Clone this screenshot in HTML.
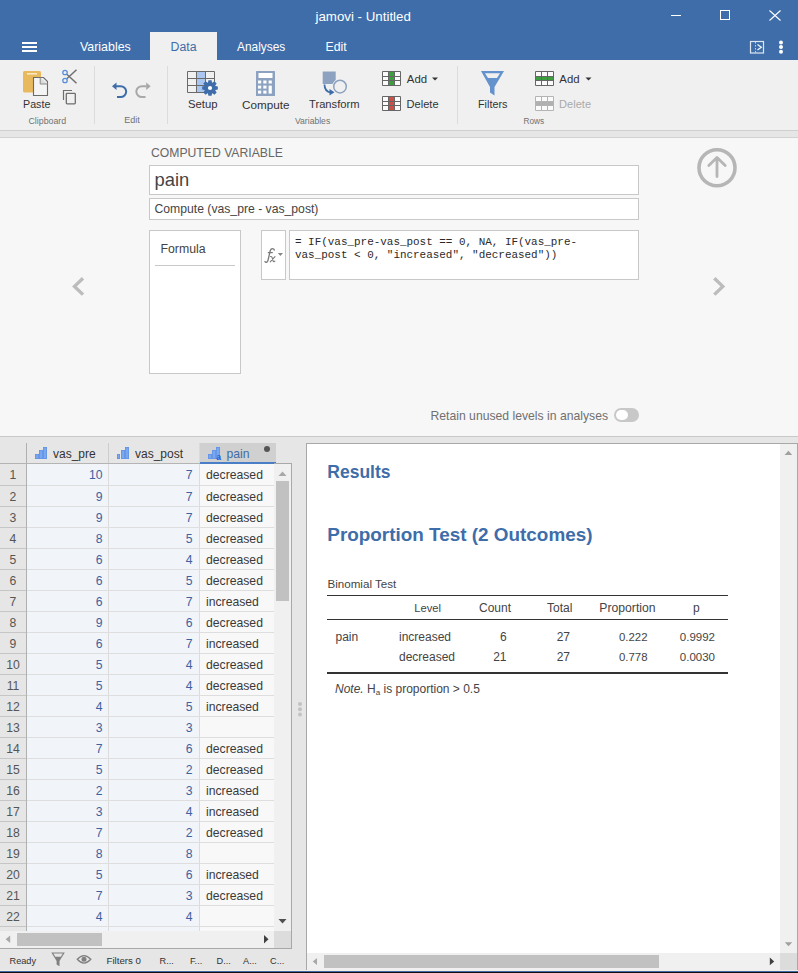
<!DOCTYPE html>
<html><head><meta charset="utf-8">
<style>
*{box-sizing:border-box;margin:0;padding:0}
html,body{width:798px;height:973px;overflow:hidden;background:#f0f0f0;font-family:"Liberation Sans",sans-serif}
body{position:relative}
.t{position:absolute;white-space:nowrap;line-height:1}
.r{position:absolute}
svg{position:absolute;left:0;top:0}
</style></head><body>
<div class="r" style="left:0px;top:0px;width:798px;height:60px;background:#3e6da9;"></div>
<div class="t" style="left:315.5px;top:9.74px;font-size:13.3px;color:#fff;font-weight:normal;">jamovi - Untitled</div>
<div class="r" style="left:671px;top:15px;width:10px;height:1px;background:#fff;"></div>
<div class="r" style="left:720px;top:10px;width:10px;height:10px;background:none;border:1px solid #fff;"></div>
<div class="r" style="left:22px;top:42px;width:15px;height:2px;background:#fff;"></div>
<div class="r" style="left:22px;top:46px;width:15px;height:2px;background:#fff;"></div>
<div class="r" style="left:22px;top:50px;width:15px;height:2px;background:#fff;"></div>
<div class="r" style="left:150px;top:32px;width:67px;height:28px;background:#f0f0f0;"></div>
<div class="t" style="left:80px;top:40.50px;font-size:12.4px;color:#fff;font-weight:normal;">Variables</div>
<div class="t" style="left:170.5px;top:40.59px;font-size:12.3px;color:#3e6da9;font-weight:normal;">Data</div>
<div class="t" style="left:237px;top:41.93px;font-size:11.9px;color:#fff;font-weight:normal;">Analyses</div>
<div class="t" style="left:325.5px;top:40.59px;font-size:12.3px;color:#fff;font-weight:normal;">Edit</div>
<div class="r" style="left:0px;top:60px;width:798px;height:70px;background:#f0f0f0;"></div>
<div class="r" style="left:94px;top:66px;width:1px;height:58px;background:#dcdcdc;"></div>
<div class="r" style="left:167px;top:66px;width:1px;height:58px;background:#dcdcdc;"></div>
<div class="r" style="left:457px;top:66px;width:1px;height:58px;background:#dcdcdc;"></div>
<div class="t" style="left:23px;top:99.44px;font-size:10.7px;color:#333;font-weight:normal;">Paste</div>
<div class="t" style="left:188px;top:98.93px;font-size:11.3px;color:#333;font-weight:normal;">Setup</div>
<div class="t" style="left:242px;top:98.60px;font-size:11.7px;color:#333;font-weight:normal;">Compute</div>
<div class="t" style="left:309px;top:99.02px;font-size:11.2px;color:#333;font-weight:normal;">Transform</div>
<div class="t" style="left:478px;top:99.36px;font-size:10.8px;color:#333;font-weight:normal;">Filters</div>
<div class="t" style="left:406.8px;top:73.65px;font-size:11.4px;color:#333;font-weight:normal;">Add</div>
<div class="t" style="left:406.5px;top:98.90px;font-size:11.1px;color:#333;font-weight:normal;">Delete</div>
<div class="t" style="left:559.3px;top:73.65px;font-size:11.4px;color:#333;font-weight:normal;">Add</div>
<div class="t" style="left:559px;top:98.90px;font-size:11.1px;color:#aaa;font-weight:normal;">Delete</div>
<div class="t" style="left:28.5px;top:116.55px;font-size:8.8px;color:#707070;font-weight:normal;">Clipboard</div>
<div class="t" style="left:124.3px;top:115.98px;font-size:9px;color:#707070;font-weight:normal;">Edit</div>
<div class="t" style="left:295px;top:116.72px;font-size:8.6px;color:#707070;font-weight:normal;">Variables</div>
<div class="t" style="left:523.5px;top:116.97px;font-size:8.3px;color:#707070;font-weight:normal;">Rows</div>
<div class="r" style="left:0px;top:130px;width:798px;height:1px;background:#cfcfcf;"></div>
<div class="r" style="left:0px;top:131px;width:798px;height:6px;background:#e6e6e6;"></div>
<div class="r" style="left:0px;top:137px;width:798px;height:1px;background:#d2d2d2;"></div>
<div class="r" style="left:0px;top:138px;width:798px;height:298px;background:#f7f7f7;"></div>
<div class="t" style="left:151px;top:146.67px;font-size:12.2px;color:#666;font-weight:normal;">COMPUTED VARIABLE</div>
<div class="r" style="left:149px;top:165px;width:490px;height:30px;background:#fff;border:1px solid #c8c8c8;"></div>
<div class="t" style="left:154.5px;top:170.72px;font-size:18.4px;color:#444;font-weight:normal;">pain</div>
<div class="r" style="left:149px;top:198px;width:490px;height:22px;background:#fff;border:1px solid #c8c8c8;"></div>
<div class="t" style="left:154.5px;top:203.17px;font-size:12.2px;color:#444;font-weight:normal;">Compute (vas_pre - vas_post)</div>
<div class="r" style="left:149px;top:230px;width:92px;height:144px;background:#fff;border:1px solid #c8c8c8;"></div>
<div class="t" style="left:160.5px;top:242.59px;font-size:12.3px;color:#444;font-weight:normal;">Formula</div>
<div class="r" style="left:155px;top:265px;width:80px;height:1px;background:#c8c8c8;"></div>
<div class="r" style="left:261px;top:230px;width:25px;height:50px;background:#fff;border:1px solid #c8c8c8;"></div>
<div class="r" style="left:289px;top:230px;width:350px;height:50px;background:#fff;border:1px solid #c8c8c8;"></div>
<div class="t" style="left:295px;top:237.43px;font-size:11.3px;color:#2a2a2a;font-weight:normal;font-family:'Liberation Mono',monospace;transform:scaleX(0.9675);transform-origin:0 0">= IF(vas_pre-vas_post == 0, NA, IF(vas_pre-</div>
<div class="t" style="left:295px;top:250.03px;font-size:11.3px;color:#2a2a2a;font-weight:normal;font-family:'Liberation Mono',monospace;transform:scaleX(0.9675);transform-origin:0 0">vas_post &lt; 0, "increased", "decreased"))</div>
<div class="t" style="left:430.5px;top:409.67px;font-size:12.2px;color:#707070;font-weight:normal;">Retain unused levels in analyses</div>
<div class="r" style="left:614px;top:408px;width:25px;height:14px;background:#c8c8c8;border-radius:7px"></div>
<div class="r" style="left:616px;top:409.8px;width:12px;height:10.6px;background:#fff;border-radius:5.5px"></div>
<div class="r" style="left:0px;top:436px;width:798px;height:1px;background:#c8c8c8;"></div>
<div class="r" style="left:0px;top:437px;width:798px;height:536px;background:#e6e6e6;"></div>
<div class="r" style="left:27px;top:464px;width:81px;height:467px;background:#f1f4f8;"></div>
<div class="r" style="left:109px;top:464px;width:90px;height:467px;background:#f1f4f8;"></div>
<div class="r" style="left:200px;top:464px;width:74px;height:467px;background:#f8f8f8;"></div>
<div class="r" style="left:26px;top:443px;width:1px;height:488px;background:#b0b0b0;"></div>
<div class="r" style="left:108px;top:443px;width:1px;height:20px;background:#cdcdcd;"></div>
<div class="r" style="left:199px;top:443px;width:1px;height:20px;background:#dadada;"></div>
<div class="r" style="left:108px;top:464px;width:1px;height:467px;background:#dcdcdc;"></div>
<div class="r" style="left:199px;top:464px;width:1px;height:467px;background:#dcdcdc;"></div>
<div class="r" style="left:0px;top:463px;width:274px;height:1px;background:#b4b4b4;"></div>
<div class="r" style="left:0px;top:485px;width:26px;height:1px;background:#c6c6c6;"></div>
<div class="r" style="left:27px;top:485px;width:247px;height:1px;background:#dedede;"></div>
<div class="r" style="left:0px;top:506px;width:26px;height:1px;background:#c6c6c6;"></div>
<div class="r" style="left:27px;top:506px;width:247px;height:1px;background:#dedede;"></div>
<div class="r" style="left:0px;top:527px;width:26px;height:1px;background:#c6c6c6;"></div>
<div class="r" style="left:27px;top:527px;width:247px;height:1px;background:#dedede;"></div>
<div class="r" style="left:0px;top:548px;width:26px;height:1px;background:#c6c6c6;"></div>
<div class="r" style="left:27px;top:548px;width:247px;height:1px;background:#dedede;"></div>
<div class="r" style="left:0px;top:569px;width:26px;height:1px;background:#c6c6c6;"></div>
<div class="r" style="left:27px;top:569px;width:247px;height:1px;background:#dedede;"></div>
<div class="r" style="left:0px;top:590px;width:26px;height:1px;background:#c6c6c6;"></div>
<div class="r" style="left:27px;top:590px;width:247px;height:1px;background:#dedede;"></div>
<div class="r" style="left:0px;top:611px;width:26px;height:1px;background:#c6c6c6;"></div>
<div class="r" style="left:27px;top:611px;width:247px;height:1px;background:#dedede;"></div>
<div class="r" style="left:0px;top:632px;width:26px;height:1px;background:#c6c6c6;"></div>
<div class="r" style="left:27px;top:632px;width:247px;height:1px;background:#dedede;"></div>
<div class="r" style="left:0px;top:653px;width:26px;height:1px;background:#c6c6c6;"></div>
<div class="r" style="left:27px;top:653px;width:247px;height:1px;background:#dedede;"></div>
<div class="r" style="left:0px;top:674px;width:26px;height:1px;background:#c6c6c6;"></div>
<div class="r" style="left:27px;top:674px;width:247px;height:1px;background:#dedede;"></div>
<div class="r" style="left:0px;top:695px;width:26px;height:1px;background:#c6c6c6;"></div>
<div class="r" style="left:27px;top:695px;width:247px;height:1px;background:#dedede;"></div>
<div class="r" style="left:0px;top:716px;width:26px;height:1px;background:#c6c6c6;"></div>
<div class="r" style="left:27px;top:716px;width:247px;height:1px;background:#dedede;"></div>
<div class="r" style="left:0px;top:737px;width:26px;height:1px;background:#c6c6c6;"></div>
<div class="r" style="left:27px;top:737px;width:247px;height:1px;background:#dedede;"></div>
<div class="r" style="left:0px;top:758px;width:26px;height:1px;background:#c6c6c6;"></div>
<div class="r" style="left:27px;top:758px;width:247px;height:1px;background:#dedede;"></div>
<div class="r" style="left:0px;top:779px;width:26px;height:1px;background:#c6c6c6;"></div>
<div class="r" style="left:27px;top:779px;width:247px;height:1px;background:#dedede;"></div>
<div class="r" style="left:0px;top:800px;width:26px;height:1px;background:#c6c6c6;"></div>
<div class="r" style="left:27px;top:800px;width:247px;height:1px;background:#dedede;"></div>
<div class="r" style="left:0px;top:821px;width:26px;height:1px;background:#c6c6c6;"></div>
<div class="r" style="left:27px;top:821px;width:247px;height:1px;background:#dedede;"></div>
<div class="r" style="left:0px;top:842px;width:26px;height:1px;background:#c6c6c6;"></div>
<div class="r" style="left:27px;top:842px;width:247px;height:1px;background:#dedede;"></div>
<div class="r" style="left:0px;top:863px;width:26px;height:1px;background:#c6c6c6;"></div>
<div class="r" style="left:27px;top:863px;width:247px;height:1px;background:#dedede;"></div>
<div class="r" style="left:0px;top:884px;width:26px;height:1px;background:#c6c6c6;"></div>
<div class="r" style="left:27px;top:884px;width:247px;height:1px;background:#dedede;"></div>
<div class="r" style="left:0px;top:905px;width:26px;height:1px;background:#c6c6c6;"></div>
<div class="r" style="left:27px;top:905px;width:247px;height:1px;background:#dedede;"></div>
<div class="r" style="left:0px;top:926px;width:26px;height:1px;background:#c6c6c6;"></div>
<div class="r" style="left:27px;top:926px;width:247px;height:1px;background:#dedede;"></div>
<div class="t" style="left:13px;transform:translateX(-50%);top:468.67px;font-size:12.2px;color:#555;font-weight:normal;">1</div>
<div class="t" style="left:102.5px;transform:translateX(-100%);top:468.67px;font-size:12.2px;color:#3d62a0;font-weight:normal;">10</div>
<div class="t" style="left:192.5px;transform:translateX(-100%);top:468.67px;font-size:12.2px;color:#3d62a0;font-weight:normal;">7</div>
<div class="t" style="left:206px;top:468.67px;font-size:12.2px;color:#3a3a3a;font-weight:normal;">decreased</div>
<div class="t" style="left:13px;transform:translateX(-50%);top:490.67px;font-size:12.2px;color:#555;font-weight:normal;">2</div>
<div class="t" style="left:102.5px;transform:translateX(-100%);top:490.67px;font-size:12.2px;color:#3d62a0;font-weight:normal;">9</div>
<div class="t" style="left:192.5px;transform:translateX(-100%);top:490.67px;font-size:12.2px;color:#3d62a0;font-weight:normal;">7</div>
<div class="t" style="left:206px;top:490.67px;font-size:12.2px;color:#3a3a3a;font-weight:normal;">decreased</div>
<div class="t" style="left:13px;transform:translateX(-50%);top:511.67px;font-size:12.2px;color:#555;font-weight:normal;">3</div>
<div class="t" style="left:102.5px;transform:translateX(-100%);top:511.67px;font-size:12.2px;color:#3d62a0;font-weight:normal;">9</div>
<div class="t" style="left:192.5px;transform:translateX(-100%);top:511.67px;font-size:12.2px;color:#3d62a0;font-weight:normal;">7</div>
<div class="t" style="left:206px;top:511.67px;font-size:12.2px;color:#3a3a3a;font-weight:normal;">decreased</div>
<div class="t" style="left:13px;transform:translateX(-50%);top:532.67px;font-size:12.2px;color:#555;font-weight:normal;">4</div>
<div class="t" style="left:102.5px;transform:translateX(-100%);top:532.67px;font-size:12.2px;color:#3d62a0;font-weight:normal;">8</div>
<div class="t" style="left:192.5px;transform:translateX(-100%);top:532.67px;font-size:12.2px;color:#3d62a0;font-weight:normal;">5</div>
<div class="t" style="left:206px;top:532.67px;font-size:12.2px;color:#3a3a3a;font-weight:normal;">decreased</div>
<div class="t" style="left:13px;transform:translateX(-50%);top:553.67px;font-size:12.2px;color:#555;font-weight:normal;">5</div>
<div class="t" style="left:102.5px;transform:translateX(-100%);top:553.67px;font-size:12.2px;color:#3d62a0;font-weight:normal;">6</div>
<div class="t" style="left:192.5px;transform:translateX(-100%);top:553.67px;font-size:12.2px;color:#3d62a0;font-weight:normal;">4</div>
<div class="t" style="left:206px;top:553.67px;font-size:12.2px;color:#3a3a3a;font-weight:normal;">decreased</div>
<div class="t" style="left:13px;transform:translateX(-50%);top:574.67px;font-size:12.2px;color:#555;font-weight:normal;">6</div>
<div class="t" style="left:102.5px;transform:translateX(-100%);top:574.67px;font-size:12.2px;color:#3d62a0;font-weight:normal;">6</div>
<div class="t" style="left:192.5px;transform:translateX(-100%);top:574.67px;font-size:12.2px;color:#3d62a0;font-weight:normal;">5</div>
<div class="t" style="left:206px;top:574.67px;font-size:12.2px;color:#3a3a3a;font-weight:normal;">decreased</div>
<div class="t" style="left:13px;transform:translateX(-50%);top:595.67px;font-size:12.2px;color:#555;font-weight:normal;">7</div>
<div class="t" style="left:102.5px;transform:translateX(-100%);top:595.67px;font-size:12.2px;color:#3d62a0;font-weight:normal;">6</div>
<div class="t" style="left:192.5px;transform:translateX(-100%);top:595.67px;font-size:12.2px;color:#3d62a0;font-weight:normal;">7</div>
<div class="t" style="left:206px;top:595.67px;font-size:12.2px;color:#3a3a3a;font-weight:normal;">increased</div>
<div class="t" style="left:13px;transform:translateX(-50%);top:616.67px;font-size:12.2px;color:#555;font-weight:normal;">8</div>
<div class="t" style="left:102.5px;transform:translateX(-100%);top:616.67px;font-size:12.2px;color:#3d62a0;font-weight:normal;">9</div>
<div class="t" style="left:192.5px;transform:translateX(-100%);top:616.67px;font-size:12.2px;color:#3d62a0;font-weight:normal;">6</div>
<div class="t" style="left:206px;top:616.67px;font-size:12.2px;color:#3a3a3a;font-weight:normal;">decreased</div>
<div class="t" style="left:13px;transform:translateX(-50%);top:637.67px;font-size:12.2px;color:#555;font-weight:normal;">9</div>
<div class="t" style="left:102.5px;transform:translateX(-100%);top:637.67px;font-size:12.2px;color:#3d62a0;font-weight:normal;">6</div>
<div class="t" style="left:192.5px;transform:translateX(-100%);top:637.67px;font-size:12.2px;color:#3d62a0;font-weight:normal;">7</div>
<div class="t" style="left:206px;top:637.67px;font-size:12.2px;color:#3a3a3a;font-weight:normal;">increased</div>
<div class="t" style="left:13px;transform:translateX(-50%);top:658.67px;font-size:12.2px;color:#555;font-weight:normal;">10</div>
<div class="t" style="left:102.5px;transform:translateX(-100%);top:658.67px;font-size:12.2px;color:#3d62a0;font-weight:normal;">5</div>
<div class="t" style="left:192.5px;transform:translateX(-100%);top:658.67px;font-size:12.2px;color:#3d62a0;font-weight:normal;">4</div>
<div class="t" style="left:206px;top:658.67px;font-size:12.2px;color:#3a3a3a;font-weight:normal;">decreased</div>
<div class="t" style="left:13px;transform:translateX(-50%);top:679.67px;font-size:12.2px;color:#555;font-weight:normal;">11</div>
<div class="t" style="left:102.5px;transform:translateX(-100%);top:679.67px;font-size:12.2px;color:#3d62a0;font-weight:normal;">5</div>
<div class="t" style="left:192.5px;transform:translateX(-100%);top:679.67px;font-size:12.2px;color:#3d62a0;font-weight:normal;">4</div>
<div class="t" style="left:206px;top:679.67px;font-size:12.2px;color:#3a3a3a;font-weight:normal;">decreased</div>
<div class="t" style="left:13px;transform:translateX(-50%);top:700.67px;font-size:12.2px;color:#555;font-weight:normal;">12</div>
<div class="t" style="left:102.5px;transform:translateX(-100%);top:700.67px;font-size:12.2px;color:#3d62a0;font-weight:normal;">4</div>
<div class="t" style="left:192.5px;transform:translateX(-100%);top:700.67px;font-size:12.2px;color:#3d62a0;font-weight:normal;">5</div>
<div class="t" style="left:206px;top:700.67px;font-size:12.2px;color:#3a3a3a;font-weight:normal;">increased</div>
<div class="t" style="left:13px;transform:translateX(-50%);top:721.67px;font-size:12.2px;color:#555;font-weight:normal;">13</div>
<div class="t" style="left:102.5px;transform:translateX(-100%);top:721.67px;font-size:12.2px;color:#3d62a0;font-weight:normal;">3</div>
<div class="t" style="left:192.5px;transform:translateX(-100%);top:721.67px;font-size:12.2px;color:#3d62a0;font-weight:normal;">3</div>
<div class="t" style="left:13px;transform:translateX(-50%);top:742.67px;font-size:12.2px;color:#555;font-weight:normal;">14</div>
<div class="t" style="left:102.5px;transform:translateX(-100%);top:742.67px;font-size:12.2px;color:#3d62a0;font-weight:normal;">7</div>
<div class="t" style="left:192.5px;transform:translateX(-100%);top:742.67px;font-size:12.2px;color:#3d62a0;font-weight:normal;">6</div>
<div class="t" style="left:206px;top:742.67px;font-size:12.2px;color:#3a3a3a;font-weight:normal;">decreased</div>
<div class="t" style="left:13px;transform:translateX(-50%);top:763.67px;font-size:12.2px;color:#555;font-weight:normal;">15</div>
<div class="t" style="left:102.5px;transform:translateX(-100%);top:763.67px;font-size:12.2px;color:#3d62a0;font-weight:normal;">5</div>
<div class="t" style="left:192.5px;transform:translateX(-100%);top:763.67px;font-size:12.2px;color:#3d62a0;font-weight:normal;">2</div>
<div class="t" style="left:206px;top:763.67px;font-size:12.2px;color:#3a3a3a;font-weight:normal;">decreased</div>
<div class="t" style="left:13px;transform:translateX(-50%);top:784.67px;font-size:12.2px;color:#555;font-weight:normal;">16</div>
<div class="t" style="left:102.5px;transform:translateX(-100%);top:784.67px;font-size:12.2px;color:#3d62a0;font-weight:normal;">2</div>
<div class="t" style="left:192.5px;transform:translateX(-100%);top:784.67px;font-size:12.2px;color:#3d62a0;font-weight:normal;">3</div>
<div class="t" style="left:206px;top:784.67px;font-size:12.2px;color:#3a3a3a;font-weight:normal;">increased</div>
<div class="t" style="left:13px;transform:translateX(-50%);top:805.67px;font-size:12.2px;color:#555;font-weight:normal;">17</div>
<div class="t" style="left:102.5px;transform:translateX(-100%);top:805.67px;font-size:12.2px;color:#3d62a0;font-weight:normal;">3</div>
<div class="t" style="left:192.5px;transform:translateX(-100%);top:805.67px;font-size:12.2px;color:#3d62a0;font-weight:normal;">4</div>
<div class="t" style="left:206px;top:805.67px;font-size:12.2px;color:#3a3a3a;font-weight:normal;">increased</div>
<div class="t" style="left:13px;transform:translateX(-50%);top:826.67px;font-size:12.2px;color:#555;font-weight:normal;">18</div>
<div class="t" style="left:102.5px;transform:translateX(-100%);top:826.67px;font-size:12.2px;color:#3d62a0;font-weight:normal;">7</div>
<div class="t" style="left:192.5px;transform:translateX(-100%);top:826.67px;font-size:12.2px;color:#3d62a0;font-weight:normal;">2</div>
<div class="t" style="left:206px;top:826.67px;font-size:12.2px;color:#3a3a3a;font-weight:normal;">decreased</div>
<div class="t" style="left:13px;transform:translateX(-50%);top:847.67px;font-size:12.2px;color:#555;font-weight:normal;">19</div>
<div class="t" style="left:102.5px;transform:translateX(-100%);top:847.67px;font-size:12.2px;color:#3d62a0;font-weight:normal;">8</div>
<div class="t" style="left:192.5px;transform:translateX(-100%);top:847.67px;font-size:12.2px;color:#3d62a0;font-weight:normal;">8</div>
<div class="t" style="left:13px;transform:translateX(-50%);top:868.67px;font-size:12.2px;color:#555;font-weight:normal;">20</div>
<div class="t" style="left:102.5px;transform:translateX(-100%);top:868.67px;font-size:12.2px;color:#3d62a0;font-weight:normal;">5</div>
<div class="t" style="left:192.5px;transform:translateX(-100%);top:868.67px;font-size:12.2px;color:#3d62a0;font-weight:normal;">6</div>
<div class="t" style="left:206px;top:868.67px;font-size:12.2px;color:#3a3a3a;font-weight:normal;">increased</div>
<div class="t" style="left:13px;transform:translateX(-50%);top:889.67px;font-size:12.2px;color:#555;font-weight:normal;">21</div>
<div class="t" style="left:102.5px;transform:translateX(-100%);top:889.67px;font-size:12.2px;color:#3d62a0;font-weight:normal;">7</div>
<div class="t" style="left:192.5px;transform:translateX(-100%);top:889.67px;font-size:12.2px;color:#3d62a0;font-weight:normal;">3</div>
<div class="t" style="left:206px;top:889.67px;font-size:12.2px;color:#3a3a3a;font-weight:normal;">decreased</div>
<div class="t" style="left:13px;transform:translateX(-50%);top:910.67px;font-size:12.2px;color:#555;font-weight:normal;">22</div>
<div class="t" style="left:102.5px;transform:translateX(-100%);top:910.67px;font-size:12.2px;color:#3d62a0;font-weight:normal;">4</div>
<div class="t" style="left:192.5px;transform:translateX(-100%);top:910.67px;font-size:12.2px;color:#3d62a0;font-weight:normal;">4</div>
<div class="r" style="left:200px;top:443px;width:76px;height:19px;background:#d0d0d0;"></div>
<div class="r" style="left:200px;top:462px;width:76px;height:2px;background:#4a7fc8;"></div>
<div class="r" style="left:34.8px;top:454px;width:3.8px;height:5.199999999999989px;background:#7aa8ee;box-shadow:inset 0 0 0 0.8px #6394e6"></div>
<div class="r" style="left:39.0px;top:450.2px;width:4.1px;height:9.0px;background:#7aa8ee;box-shadow:inset 0 0 0 0.8px #6394e6"></div>
<div class="r" style="left:43.3px;top:447px;width:3.8px;height:12.199999999999989px;background:#7aa8ee;box-shadow:inset 0 0 0 0.8px #6394e6"></div>
<div class="r" style="left:116.6px;top:454px;width:3.8px;height:5.199999999999989px;background:#7aa8ee;box-shadow:inset 0 0 0 0.8px #6394e6"></div>
<div class="r" style="left:120.8px;top:450.2px;width:4.1px;height:9.0px;background:#7aa8ee;box-shadow:inset 0 0 0 0.8px #6394e6"></div>
<div class="r" style="left:125.1px;top:447px;width:3.8px;height:12.199999999999989px;background:#7aa8ee;box-shadow:inset 0 0 0 0.8px #6394e6"></div>
<div class="r" style="left:207.8px;top:454px;width:3.8px;height:5.300000000000011px;background:#7aa8ee;box-shadow:inset 0 0 0 0.8px #6394e6"></div>
<div class="r" style="left:212.0px;top:450.2px;width:4.1px;height:9.100000000000023px;background:#7aa8ee;box-shadow:inset 0 0 0 0.8px #6394e6"></div>
<div class="r" style="left:216.3px;top:447px;width:3.8px;height:12.300000000000011px;background:#7aa8ee;box-shadow:inset 0 0 0 0.8px #6394e6"></div>
<div class="t" style="left:216.3px;top:452.72px;font-size:8.6px;color:#2a5fd8;font-weight:bold;">a</div>
<div class="t" style="left:53px;top:447.84px;font-size:12px;color:#333;font-weight:normal;">vas_pre</div>
<div class="t" style="left:135px;top:447.84px;font-size:12px;color:#333;font-weight:normal;">vas_post</div>
<div class="t" style="left:226.5px;top:447.67px;font-size:12.2px;color:#3e6da9;font-weight:normal;">pain</div>
<div class="r" style="left:264px;top:446px;width:6px;height:6px;border-radius:3px;background:#555"></div>
<div class="r" style="left:274px;top:464px;width:17px;height:467px;background:#f0f0f0;"></div>
<div class="r" style="left:276px;top:481px;width:13px;height:120px;background:#c1c1c1;"></div>
<div class="r" style="left:0px;top:931px;width:274px;height:17px;background:#f0f0f0;"></div>
<div class="r" style="left:274px;top:931px;width:17px;height:17px;background:#dcdcdc;"></div>
<div class="r" style="left:17px;top:933px;width:85px;height:13px;background:#c1c1c1;"></div>
<div class="r" style="left:291px;top:463px;width:1px;height:486px;background:#a8a8a8;"></div>
<div class="r" style="left:0px;top:948px;width:292px;height:1px;background:#a8a8a8;"></div>
<div class="r" style="left:274px;top:463px;width:18px;height:1px;background:#a8a8a8;"></div>
<div class="r" style="left:306px;top:443px;width:492px;height:528px;background:#ffffff;border:1px solid #a8a8a8;border-bottom:none"></div>
<div class="r" style="left:780px;top:444px;width:17px;height:509px;background:#f0f0f0;"></div>
<div class="r" style="left:307px;top:953px;width:473px;height:17px;background:#f0f0f0;"></div>
<div class="r" style="left:780px;top:953px;width:17px;height:17px;background:#dcdcdc;"></div>
<div class="r" style="left:324px;top:955px;width:335px;height:13px;background:#c1c1c1;"></div>
<div class="r" style="left:0px;top:970px;width:798px;height:1px;background:#f2ede6;"></div>
<div class="r" style="left:0px;top:971px;width:798px;height:1px;background:#3e6da9;"></div>
<div class="r" style="left:0px;top:972px;width:798px;height:1px;background:#101010;"></div>
<div class="t" style="left:327.3px;top:464.19px;font-size:17.5px;color:#3e6da9;font-weight:bold;">Results</div>
<div class="t" style="left:327.3px;top:525.50px;font-size:18.9px;color:#3e6da9;font-weight:bold;">Proportion Test (2 Outcomes)</div>
<div class="t" style="left:327.5px;top:578.18px;font-size:11.6px;color:#444;font-weight:normal;">Binomial Test</div>
<div class="r" style="left:327px;top:595px;width:401px;height:1px;background:#333;"></div>
<div class="r" style="left:327px;top:619px;width:401px;height:1px;background:#333;"></div>
<div class="r" style="left:327px;top:672px;width:401px;height:2px;background:#333;"></div>
<div class="t" style="left:414.3px;top:602.52px;font-size:11.2px;color:#444;font-weight:normal;">Level</div>
<div class="t" style="left:479px;top:601.84px;font-size:12px;color:#444;font-weight:normal;">Count</div>
<div class="t" style="left:547px;top:601.84px;font-size:12px;color:#444;font-weight:normal;">Total</div>
<div class="t" style="left:599.3px;top:601.67px;font-size:12.2px;color:#444;font-weight:normal;">Proportion</div>
<div class="t" style="left:693px;top:601.84px;font-size:12px;color:#444;font-weight:normal;">p</div>
<div class="t" style="left:335.5px;top:630.84px;font-size:12px;color:#444;font-weight:normal;">pain</div>
<div class="t" style="left:399px;top:630.84px;font-size:12px;color:#444;font-weight:normal;">increased</div>
<div class="t" style="left:399px;top:650.64px;font-size:12px;color:#444;font-weight:normal;">decreased</div>
<div class="t" style="left:506.7px;transform:translateX(-100%);top:630.84px;font-size:12px;color:#444;font-weight:normal;">6</div>
<div class="t" style="left:506.5px;transform:translateX(-100%);top:650.64px;font-size:12px;color:#444;font-weight:normal;">21</div>
<div class="t" style="left:570px;transform:translateX(-100%);top:630.84px;font-size:12px;color:#444;font-weight:normal;">27</div>
<div class="t" style="left:570px;transform:translateX(-100%);top:650.64px;font-size:12px;color:#444;font-weight:normal;">27</div>
<div class="t" style="left:647.5px;transform:translateX(-100%);top:631.85px;font-size:11.4px;color:#444;font-weight:normal;">0.222</div>
<div class="t" style="left:647.5px;transform:translateX(-100%);top:651.65px;font-size:11.4px;color:#444;font-weight:normal;">0.778</div>
<div class="t" style="left:715px;transform:translateX(-100%);top:631.77px;font-size:11.5px;color:#444;font-weight:normal;">0.9992</div>
<div class="t" style="left:715px;transform:translateX(-100%);top:651.57px;font-size:11.5px;color:#444;font-weight:normal;">0.0030</div>
<div class="t" style="left:335px;top:683.04px;font-size:12px;color:#444;font-weight:normal;"><i>Note.</i> H<span style='font-size:8px;position:relative;top:1.5px'>a</span> is proportion &gt; 0.5</div>
<div class="r" style="left:0px;top:949px;width:306px;height:21px;background:#e6e6e6;"></div>
<div class="t" style="left:9.5px;top:956.51px;font-size:9.2px;color:#333;font-weight:normal;">Ready</div>
<div class="t" style="left:106.5px;top:956.09px;font-size:9.7px;color:#333;font-weight:normal;">Filters 0</div>
<div class="t" style="left:159.5px;top:956.51px;font-size:9.2px;color:#333;font-weight:normal;">R...</div>
<div class="t" style="left:190px;top:956.51px;font-size:9.2px;color:#333;font-weight:normal;">F...</div>
<div class="t" style="left:216.5px;top:956.51px;font-size:9.2px;color:#333;font-weight:normal;">D...</div>
<div class="t" style="left:243px;top:956.51px;font-size:9.2px;color:#333;font-weight:normal;">A...</div>
<div class="t" style="left:270px;top:956.51px;font-size:9.2px;color:#333;font-weight:normal;">C...</div>
<svg width="798" height="973" style="pointer-events:none"><path d="M769.5,10.5 L780.5,20.5 M780.5,10.5 L769.5,20.5" stroke="#fff" stroke-width="1.1" fill="none"/><rect x="750.5" y="41.5" width="13" height="11.5" fill="none" stroke="#dfe6f0" stroke-width="1.2"/><path d="M755.5,42 L755.5,52.5" stroke="#c8d4e6" stroke-width="1" stroke-dasharray="1.5,1.5"/><path d="M757.5,44.5 L761.3,47.3 L757.5,50" stroke="#f0f4fa" stroke-width="1.3" fill="none"/><circle cx="781" cy="42.4" r="2" fill="#fff"/><circle cx="781" cy="47.1" r="2" fill="#fff"/><circle cx="781" cy="51.7" r="2" fill="#fff"/><rect x="23" y="71" width="18" height="21.5" rx="1.5" fill="#e9b95e"/><rect x="27" y="73" width="10" height="1.6" fill="#fbe8c0"/><path d="M33.5,77.5 L43.5,77.5 L47.5,81.5 L47.5,95.5 L33.5,95.5 Z" fill="#f4f4f4" stroke="#6a6a6a" stroke-width="1.1"/><path d="M40.2,77.5 L40.2,84 L47.5,84" fill="#dcdcdc" stroke="#8a8a8a" stroke-width="1"/><path d="M66.8,74.3 L76.5,83.3 M66.8,78.7 L76.5,69.7" stroke="#707070" stroke-width="1.5" fill="none"/><circle cx="65" cy="72.5" r="2.2" fill="none" stroke="#5b8fd8" stroke-width="1.3"/><circle cx="65" cy="80.5" r="2.2" fill="none" stroke="#5b8fd8" stroke-width="1.3"/><path d="M63.5,100 L63.5,90.5 L72,90.5" stroke="#6e6e6e" stroke-width="1.2" fill="none"/><rect x="66.3" y="93.3" width="9" height="10.5" rx="0.8" fill="none" stroke="#6e6e6e" stroke-width="1.3"/><path d="M116,86.2 L120.5,86.2 A5.7,5.4 0 0 1 120.5,97 L117,97" stroke="#3e6da9" stroke-width="2" fill="none"/><path d="M112,86.2 L116.5,82.5 L116.5,90 Z" fill="#3e6da9"/><path d="M146.5,86.2 L142,86.2 A5.7,5.4 0 0 0 142,97 L145.5,97" stroke="#a8a8a8" stroke-width="2" fill="none"/><path d="M150.7,86.2 L146.2,82.5 L146.2,90 Z" fill="#a8a8a8"/><rect x="196" y="71.5" width="9" height="21" fill="#a9c6f0"/><path d="M187.5,71.5 H214.5 V92.5 H187.5 Z M196.5,71.5 V92.5 M205.5,71.5 V92.5 M187.5,78.5 H214.5 M187.5,85.5 H214.5" stroke="#6a6a6a" stroke-width="1" fill="none"/><path d="M217.84,86.41 L217.84,89.59 L215.43,90.04 L215.27,90.42 L216.67,92.42 L214.42,94.67 L212.39,93.28 L212.02,93.44 L211.59,95.84 L208.41,95.84 L207.96,93.43 L207.58,93.27 L205.58,94.67 L203.33,92.42 L204.72,90.39 L204.56,90.02 L202.16,89.59 L202.16,86.41 L204.57,85.96 L204.73,85.58 L203.33,83.58 L205.58,81.33 L207.61,82.72 L207.98,82.56 L208.41,80.16 L211.59,80.16 L212.04,82.57 L212.42,82.73 L214.42,81.33 L216.67,83.58 L215.28,85.61 L215.44,85.98 Z" fill="#3e6da9" stroke="#f0f0f0" stroke-width="0.01"/><circle cx="210" cy="88" r="2.1" fill="#fff"/><rect x="256" y="71" width="19" height="25" rx="0.5" fill="#8da2c0"/><rect x="258.5" y="73" width="14" height="5" fill="#fff"/><rect x="258" y="80.5" width="3.2" height="3" fill="#fff"/><rect x="263.3" y="80.5" width="3.2" height="3" fill="#fff"/><rect x="268.6" y="80.5" width="3.2" height="3" fill="#fff"/><rect x="258" y="85.6" width="3.2" height="3" fill="#fff"/><rect x="263.3" y="85.6" width="3.2" height="3" fill="#fff"/><rect x="258" y="90.6" width="3.2" height="3" fill="#fff"/><rect x="263.3" y="90.6" width="3.2" height="3" fill="#fff"/><rect x="268.6" y="85.6" width="3.2" height="8" fill="#fff"/><rect x="322.7" y="71.5" width="13" height="12.5" fill="#8da2c0"/><circle cx="340" cy="86.6" r="7.8" fill="#f0f0f0"/><circle cx="340" cy="86.6" r="6.3" fill="none" stroke="#8da2c0" stroke-width="1.5"/><path d="M324.5,84.5 C324.5,89.5 327,92 331,92.5" stroke="#3e6da9" stroke-width="1.8" fill="none"/><path d="M329.5,89 L334.5,92.3 L329.5,95.5 Z" fill="#3e6da9"/><rect x="383" y="72" width="17" height="13" fill="#fbfbfb"/><rect x="389" y="72" width="5" height="13" fill="#3c9e3f"/><path d="M382.5,71.5 H400.5 V85.5 H382.5 Z M388.5,72 V85 M394.5,72 V85 M383,76.5 H400 M383,80.5 H400" stroke="#666" stroke-width="1" fill="none"/><rect x="383" y="97" width="17" height="13" fill="#fbfbfb"/><rect x="389" y="97" width="5" height="13" fill="#c9514a"/><path d="M382.5,96.5 H400.5 V110.5 H382.5 Z M388.5,97 V110 M394.5,97 V110 M383,101.5 H400 M383,105.5 H400" stroke="#666" stroke-width="1" fill="none"/><rect x="536" y="72" width="17" height="13" fill="#fbfbfb"/><rect x="536" y="77" width="17" height="3" fill="#3c9e3f"/><path d="M535.5,71.5 H553.5 V85.5 H535.5 Z M541.5,72 V85 M547.5,72 V85 M536,76.5 H553 M536,80.5 H553" stroke="#666" stroke-width="1" fill="none"/><rect x="536" y="97" width="17" height="13" fill="#fbfbfb"/><rect x="536" y="102" width="17" height="3" fill="#b0b0b0"/><path d="M535.5,96.5 H553.5 V110.5 H535.5 Z M541.5,97 V110 M547.5,97 V110 M536,101.5 H553 M536,105.5 H553" stroke="#b4b4b4" stroke-width="1" fill="none"/><path d="M432,77.5 L438,77.5 L435,80.5 Z" fill="#333"/><path d="M585.5,77.5 L591.5,77.5 L588.5,80.5 Z" fill="#333"/><path d="M481,71 L504,71 L494.5,87 L494.5,95.6 L490,92.6 L490,87 Z M485,73.2 L488,78 L497,78 L500,73.2 Z" fill="#6392cc" fill-rule="evenodd"/><circle cx="717" cy="167.8" r="18" fill="none" stroke="#b6b6b6" stroke-width="3.6"/><path d="M708.8,165.6 L717,157.6 L725.2,165.6 M717,158.5 L717,176.5" stroke="#b6b6b6" stroke-width="2.8" fill="none" stroke-linecap="round" stroke-linejoin="round"/><path d="M83,278.2 L74.5,286.4 L83,294.6" stroke="#bcbcbc" stroke-width="3.4" fill="none"/><path d="M714.3,278.2 L722.8,286.4 L714.3,294.6" stroke="#bcbcbc" stroke-width="3.4" fill="none"/><path d="M274.3,250 C273.8,248.2 271.2,247.8 270.3,250.5 L268,260.3 C267.4,262.6 265.8,262.8 265,261.6" stroke="#7a7a7a" stroke-width="1.35" fill="none" stroke-linecap="round"/><path d="M267.8,252.6 L272.8,252.6" stroke="#7a7a7a" stroke-width="1.2" fill="none"/><path d="M270.6,256.6 C271.6,256.2 272,257 272.4,258.3 L273.1,260.8 C273.4,261.9 274.2,261.9 274.9,261.2 M275,256.6 L270.2,261.9" stroke="#7a7a7a" stroke-width="1.1" fill="none" stroke-linecap="round"/><path d="M277.8,253 L283,253 L280.4,256 Z" fill="#888"/><path d="M784.6,455 L788.4,450.8 L792.2,455 Z" fill="#a0a0a0"/><path d="M784.8,942.2 L788.5,946.3 L792.2,942.2 Z" fill="#a0a0a0"/><path d="M317,958 L312.8,961.5 L317,965 Z" fill="#a8a8a8"/><path d="M769.8,957.6 L774.2,961.4 L769.8,965.2 Z" fill="#404040"/><path d="M264,935 L268.5,939.3 L264,943.5 Z" fill="#404040"/><circle cx="300" cy="703.9" r="2" fill="#c2c2c2"/><circle cx="300" cy="709.2" r="2" fill="#c2c2c2"/><circle cx="300" cy="714.4" r="2" fill="#c2c2c2"/><path d="M51.3,952.4 L64.8,952.4 L59.5,961 L59.5,966.2 L56.6,964.5 L56.6,961 Z M53.3,953.5 L62.8,953.5 L60.8,956.8 L55.3,956.8 Z" fill="#808080" fill-rule="evenodd"/><path d="M278.5,476 L282.5,471.5 L286.5,476 Z" fill="#a8a8a8"/><path d="M278.5,919 L282.5,923.5 L286.5,919 Z" fill="#505050"/><path d="M10.2,935.6 L5.6,939.3 L10.2,943 Z" fill="#a8a8a8"/><path d="M77.3,959.3 Q84,951.8 90.8,959.3 Q84,966.8 77.3,959.3 Z" fill="none" stroke="#808080" stroke-width="1.3"/><circle cx="84" cy="959.3" r="2.5" fill="#808080"/></svg>
</body></html>
